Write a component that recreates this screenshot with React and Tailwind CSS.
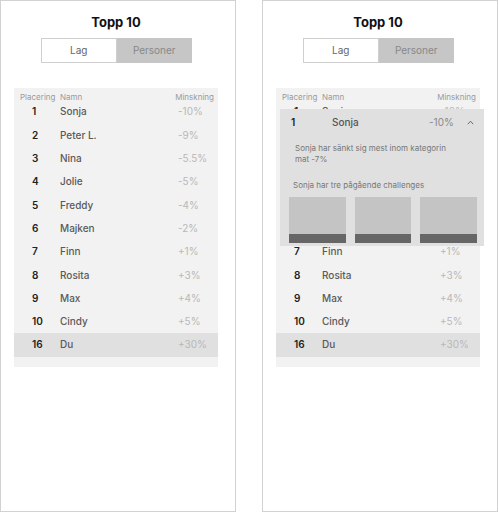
import React from "react";

const rows = [
  { rank: 1, name: "Sonja", change: "-10%" },
  { rank: 2, name: "Peter L.", change: "-9%" },
  { rank: 3, name: "Nina", change: "-5.5%" },
  { rank: 4, name: "Jolie", change: "-5%" },
  { rank: 5, name: "Freddy", change: "-4%" },
  { rank: 6, name: "Majken", change: "-2%" },
  { rank: 7, name: "Finn", change: "+1%" },
  { rank: 8, name: "Rosita", change: "+3%" },
  { rank: 9, name: "Max", change: "+4%" },
  { rank: 10, name: "Cindy", change: "+5%" },
];

const me = { rank: 16, name: "Du", change: "+30%" };

const Row = ({ row, highlight, hidden }) => (
  <div
    className={`flex items-center h-[23.3px] text-[10px] ${
      highlight ? "bg-[#e0e0e0]" : ""
    } ${hidden ? "invisible" : ""}`}
  >
    <div className="ml-[18px] w-[28px] font-semibold text-[#222]">{row.rank}</div>
    <div className="w-[118px] font-medium text-[#5a5a5a]">{row.name}</div>
    <div className="text-[#b8b8b8]">{row.change}</div>
  </div>
);

// opened row for the top person, lies over the list
const ExpandedCard = () => (
  <div className="absolute left-[4px] top-[21px] w-[204px] h-[137px] bg-[#e0e0e0]">
    <div className="flex items-center h-[27px] text-[10px]">
      <div className="ml-[11px] w-[41px] font-semibold text-[#222]">1</div>
      <div className="w-[97px] font-medium text-[#555]">Sonja</div>
      <div className="w-[38px] text-[#888]">-10%</div>
      <svg width="7" height="5" viewBox="0 0 7 5" className="text-[#666]">
        <path d="M0.8 4.2 L3.5 1.2 L6.2 4.2" fill="none" stroke="currentColor" strokeWidth="1" />
      </svg>
    </div>
    <p className="mt-[7px] ml-[15px] w-[160px] text-[8px] leading-[11px] text-[#777]">
      Sonja har sänkt sig mest inom kategorin mat -7%
    </p>
    <p className="mt-[15px] ml-[13px] text-[8px] leading-[11px] text-[#777]">
      Sonja har tre pågående challenges
    </p>
    <div className="mt-[6px] ml-[9px] mr-[7px] grid grid-cols-3 gap-[9px]">
      {[0, 1, 2].map((i) => (
        <div key={i} className="h-[46px] bg-[#c4c4c4] flex flex-col justify-end">
          <div className="h-[9px] bg-[#666]" />
        </div>
      ))}
    </div>
  </div>
);

const Screen = ({ expanded }) => (
  <div className="w-[236px] h-[512px] border border-[#d2d2d2] bg-white">
    <div className="ml-[13px] w-[204px] flex flex-col items-center">
      <h1 className="mt-[13px] text-[13px] leading-[16px] font-bold text-[#111]">Topp 10</h1>
      <div className="mt-[8px] flex h-[25px] w-[151px] text-[10px]">
        <div className="flex-1 flex items-center justify-center border border-[#cfcfcf] bg-white text-[#666]">
          Lag
        </div>
        <div className="flex-1 flex items-center justify-center bg-[#c6c6c6] text-[#888]">
          Personer
        </div>
      </div>
      <div className="relative mt-[25px] w-[204px] bg-[#f2f2f2] pb-[10px]">
        <div className="h-[12.35px] text-[8px] leading-[8px] text-[#9a9a9a]">
          <div className="flex pt-[5px]">
            <span className="ml-[6px] w-[40px]">Placering</span>
            <span>Namn</span>
            <span className="ml-auto mr-[4px]">Minskning</span>
          </div>
        </div>
        {rows.map((r) => (
          <Row key={r.rank} row={r} hidden={expanded && r.rank > 1 && r.rank < 7} />
        ))}
        <Row row={me} highlight />
        {expanded && <ExpandedCard />}
      </div>
    </div>
  </div>
);

export default function App() {
  return (
    <div
      className="w-[498px] h-[512px] flex gap-[26px] bg-white"
      style={{ fontFamily: "Inter, 'Noto Sans', sans-serif" }}
    >
      <Screen />
      <Screen expanded />
    </div>
  );
}
